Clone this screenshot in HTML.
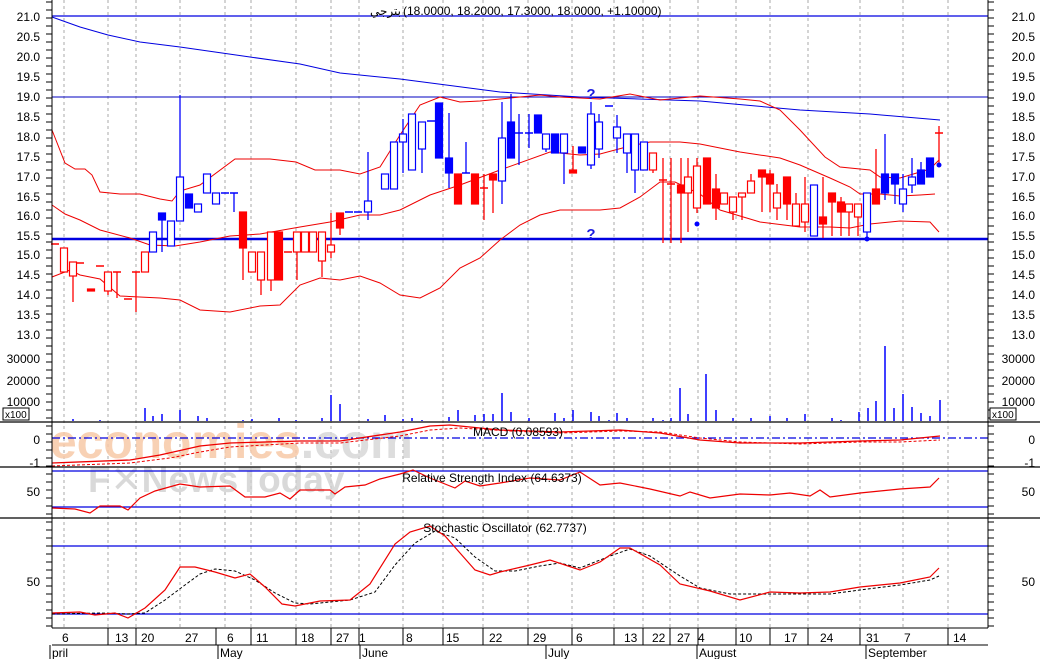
<!DOCTYPE html>
<html><head><meta charset="utf-8"><style>
html,body{margin:0;padding:0;background:#fff;width:1040px;height:659px;overflow:hidden}
svg{display:block;font-family:"Liberation Sans","DejaVu Sans",sans-serif}
</style></head><body>
<svg id="s" width="1040" height="659" viewBox="0 0 1040 659" xmlns="http://www.w3.org/2000/svg">
<rect width="1040" height="659" fill="#fff"/>
<g id="grid" stroke="#aaa" stroke-dasharray="3,3" stroke-width="1"></g>
<!-- watermark -->
<text x="50" y="458" font-size="48" fill="#f7c9a8" font-weight="bold" opacity="0.85">economies<tspan fill="#d8d8d8">.com</tspan></text>
<text x="88" y="492" font-size="37" fill="#d0d0d0" font-weight="bold" opacity="0.8">F✕NewsToday</text>
<g id="ind"></g>
<g id="price"></g>
<g id="axes"></g>
<text x="401" y="15" font-size="12" text-anchor="end" fill="#000" font-family="'DejaVu Sans',sans-serif">بترجي</text>
<text x="403" y="15" font-size="12" text-anchor="start" fill="#000" direction="ltr">(18.0000, 18.2000, 17.3000, 18.0000, +1.10000)</text>
<text x="518" y="436" font-size="12" text-anchor="middle" fill="#000">MACD (0.08593)</text>
<text x="492" y="482" font-size="12" text-anchor="middle" fill="#000">Relative Strength Index (64.6373)</text>
<text x="505" y="532" font-size="12" text-anchor="middle" fill="#000">Stochastic Oscillator (62.7737)</text>
<text x="591" y="99" font-size="15" font-weight="bold" text-anchor="middle" fill="#1a1ae0">?</text>
<text x="591" y="239" font-size="15" font-weight="bold" text-anchor="middle" fill="#1a1ae0">?</text>
</svg>
<script>
var NS="http://www.w3.org/2000/svg";
function el(p,t,a){var e=document.createElementNS(NS,t);for(var k in a)e.setAttribute(k,a[k]);document.getElementById(p).appendChild(e);return e;}
function pl(p,pts,c,w,d){el(p,"polyline",{points:pts.map(function(q){return q.join(",")}).join(" "),fill:"none",stroke:c,"stroke-width":w||1,"stroke-dasharray":d||""});}
function ln(p,x1,y1,x2,y2,c,w,d){el(p,"line",{x1:x1,y1:y1,x2:x2,y2:y2,stroke:c,"stroke-width":w||1,"stroke-dasharray":d||""});}
function tx(p,x,y,s,a,sz){var e=el(p,"text",{x:x,y:y,"font-size":sz||12,"text-anchor":a||"start",fill:"#000"});e.textContent=s;}
[64,108,136,180,225,251,296,331,359,403,443,483,528,572,614,643,670,698,736,770,808,860,903,948].forEach(function(x){ln("grid",x,0,x,628,"#aaa",1,"3,3");});
ln("ind",52,16,988,16,"#0000e0",1.3);
ln("ind",52,97,988,97,"#0000c0",1);
ln("ind",52,239,988,239,"#0000e0",2.5);
pl("ind",[[52,17],[80,27],[108,35],[140,42],[180,47],[250,57],[300,64],[340,73],[400,79],[500,92],[580,97],[700,101],[800,110],[870,114],[940,120]],"#0000e0",1);
pl("ind",[[52,130],[65,163],[75,169],[85,169],[92,175],[100,192],[110,193],[120,194],[140,194],[160,199],[172,201],[180,191],[200,185],[235,159],[270,159],[296,162],[315,170],[340,170],[360,174],[380,167],[400,135],[420,105],[440,97],[460,102],[480,101],[510,98],[540,95],[560,97],[600,99],[630,94],[660,100],[700,96],[740,99],[760,101],[780,110],[800,130],[825,157],[840,167],[870,170],[880,177],[900,178],[930,169],[939,160]],"#ee0000",1);
pl("ind",[[52,205],[65,214],[80,220],[100,230],[130,238],[150,245],[175,246],[200,242],[230,236],[260,234],[300,227],[330,222],[360,215],[380,215],[400,210],[430,195],[460,185],[500,170],[550,152],[580,155],[600,154],[630,146],[650,142],[680,142],[700,144],[740,152],[780,158],[800,165],[830,178],[850,187],[860,194],[880,194],[900,196],[920,195],[935,194]],"#ee0000",1);
pl("ind",[[52,277],[70,270],[80,275],[100,279],[120,296],[160,298],[180,300],[200,310],[230,312],[260,306],[280,305],[300,285],[320,278],[340,280],[360,276],[380,283],[400,295],[420,298],[440,288],[460,268],[480,258],[500,240],[520,225],[540,215],[560,210],[600,210],[620,208],[640,197],[660,182],[675,182],[700,194],[720,210],[760,222],[800,227],[830,227],[850,228],[870,224],[900,221],[930,222],[939,232]],"#ee0000",1);
var C=[[55,244,244,244,244,'r',0],[64,248,272,248,272,'r',0],[73,262,276,262,302,'r',0],[80,263,263,263,263,'r',0],[91,289,291,289,291,'r',1],[100,266,266,266,266,'r',0],[108,272,291,272,295,'r',0],[117,272,272,272,298,'r',0],[128,299,299,299,299,'r',0],[136,272,272,272,312,'r',0],[145,252,272,252,272,'r',0],
[153,232,252,232,252,'b',0],[162,213,220,213,252,'b',1],[171,221,246,221,246,'b',0],[180,177,221,95,221,'b',0],[189,194,208,194,208,'b',1],[198,204,212,204,212,'b',0],[207,174,193,174,193,'b',0],[216,193,204,193,204,'b',0],[225,193,193,193,193,'b',0],[234,193,193,193,212,'b',0],
[243,212,248,212,280,'r',1],[252,252,272,252,272,'r',0],[261,252,280,252,295,'r',0],[271,232,280,232,291,'r',0],[279,232,280,232,280,'r',1],[288,252,252,252,252,'r',0],[297,232,252,232,280,'r',0],[305,232,252,232,252,'r',0],[313,232,252,232,252,'r',0],[322,232,261,232,277,'r',0],[331,245,252,213,258,'r',0],[340,213,228,213,235,'r',1],
[349,212,212,212,212,'b',0],[358,212,212,212,212,'b',0],[368,201,212,152,220,'b',0],[385,174,189,174,189,'b',0],[394,142,189,142,189,'b',0],[403,134,142,119,173,'b',0],[412,114,170,114,170,'b',0],[422,122,149,122,173,'b',0],[431,121,121,121,121,'b',0],[439,103,158,103,158,'b',1],[449,158,173,113,188,'b',1],
[458,174,204,174,204,'r',1],[466,173,173,142,173,'b',0],[475,174,204,174,204,'r',1],[484,188,188,174,220,'r',0],[493,174,180,174,213,'r',1],
[502,138,181,102,204,'b',0],[511,122,158,94,158,'b',1],[519,133,133,114,165,'b',0],[529,133,133,114,148,'b',0],[538,115,133,115,133,'b',1],[546,134,149,134,152,'b',0],[555,134,153,134,153,'b',1],[564,134,153,134,184,'b',0],[573,170,173,146,173,'r',1],[582,147,153,147,153,'b',1],[591,114,165,102,169,'b',0],[599,122,149,114,158,'b',0],[609,106,106,106,106,'b',0],[617,127,138,115,153,'b',0],[627,134,153,134,173,'b',0],[635,134,170,134,193,'b',0],[644,142,170,142,170,'b',0],
[653,153,170,153,173,'r',0],[663,180,180,158,243,'r',0],[671,184,184,158,243,'r',0],[681,185,193,158,243,'r',1],[688,177,193,158,232,'r',0],[697,166,208,158,213,'r',0],[707,158,204,158,204,'r',1],[716,189,208,174,220,'r',1],[724,193,204,193,204,'r',0],[733,197,212,197,220,'r',0],[742,193,197,193,220,'r',0],[751,181,193,174,193,'r',0],[762,170,177,170,212,'r',1],[770,174,184,170,212,'r',1],[777,193,208,184,220,'r',0],[787,177,204,177,220,'r',1],[796,204,226,193,227,'r',0],[805,204,222,177,232,'r',0],[814,185,236,185,236,'b',0],[823,217,224,177,238,'r',1],[832,193,202,193,236,'r',1],[841,202,212,197,236,'r',1],[849,204,212,204,236,'r',0],[858,204,217,204,236,'r',0],[867,193,232,193,239,'b',0],[876,189,204,149,204,'r',1],[885,174,193,134,200,'b',1],[895,174,184,174,204,'b',1],[903,189,204,174,212,'b',0],[912,177,185,158,193,'b',0],[921,170,184,162,184,'b',1],[930,158,177,158,177,'b',1],[939,133,133,126,166,'r',0]];
C.forEach(function(c){var col=c[5]=='r'?'#ff0000':'#0000ff';
 ln("price",c[0],c[3],c[0],c[4],col,1.3);
 if(c[2]-c[1]<1){ln("price",c[0]-4,c[1],c[0]+4,c[1],col,1.5);}
 else el("price","rect",{x:c[0]-3.5,y:c[1],width:7,height:c[2]-c[1],fill:c[6]?col:"#fff",stroke:col,"stroke-width":1.2});
});
[[697,224],[939,165],[867,239]].forEach(function(p){el("price","circle",{cx:p[0],cy:p[1],r:2.5,fill:"#0000ff"});});
var V=[[73,419],[100,420],[145,408],[153,416],[162,414],[180,410],[198,416],[207,418],[243,420],[252,419],[279,418],[296,420],[322,418],[331,395],[340,404],[368,419],[385,415],[403,419],[412,418],[422,420],[449,417],[458,410],[475,415],[484,414],[493,414],[502,393],[511,412],[529,418],[555,413],[564,418],[573,410],[591,412],[599,416],[609,420],[617,413],[627,418],[653,418],[663,420],[671,418],[680,388],[688,414],[706,374],[716,410],[733,418],[751,418],[770,416],[787,418],[805,414],[832,418],[841,420],[859,412],[868,408],[876,401],[885,346],[894,408],[903,394],[912,407],[921,413],[930,416],[940,400]];
V.forEach(function(v){ln("price",v[0],v[1],v[0],421,"#0000ff",1.5);});
ln("ind",52,438,988,438,"#0000e0",1.2,"8,3,2,3");
pl("ind",[[52,463],[130,460],[160,455],[200,446],[230,443],[300,441],[340,441],[400,432],[430,426],[450,425],[500,430],[560,432],[620,430],[660,433],[700,440],[740,443],[800,443],[860,441],[900,440],[940,436]],"#ee0000",1.3);
pl("ind",[[52,466],[130,463],[170,458],[200,452],[230,447],[300,443],[340,443],[400,436],[430,430],[460,428],[510,431],[560,433],[620,431],[660,432],[700,438],[740,442],[800,444],[860,442],[900,442],[940,440]],"#ee0000",1,"3,2");
ln("ind",52,471,988,471,"#0000e0",1.2);ln("ind",52,507,988,507,"#0000e0",1.2);
pl("ind",[[52,508],[75,509],[90,513],[100,506],[120,506],[128,510],[140,498],[155,491],[180,484],[200,487],[230,486],[245,497],[265,497],[280,493],[290,499],[300,490],[330,490],[335,494],[345,487],[365,485],[380,479],[400,474],[413,470],[430,478],[455,488],[465,481],[480,486],[500,483],[530,478],[560,480],[580,472],[600,485],[620,483],[650,489],[680,496],[690,492],[710,498],[740,494],[770,495],[790,493],[810,496],[820,490],[830,497],[860,493],[900,489],[930,487],[939,478]],"#ee0000",1.2);
ln("ind",52,546,988,546,"#0000e0",1.2);ln("ind",52,614,988,614,"#0000e0",1.2);
pl("ind",[[52,614],[100,613],[128,614],[145,613],[165,600],[185,585],[200,574],[215,569],[235,571],[255,580],[275,593],[295,603],[310,604],[330,602],[350,600],[375,592],[395,565],[415,543],[435,531],[455,538],[475,557],[495,571],[515,571],[540,566],[560,563],[580,568],[610,556],[630,549],[650,556],[680,576],[700,588],[730,594],[760,594],[800,594],[830,594],[860,590],[900,585],[930,580],[939,576]],"#000",1,"3,2");
pl("ind",[[52,613],[80,612],[95,615],[115,613],[128,618],[145,608],[165,590],[180,567],[195,567],[215,572],[235,578],[250,574],[265,587],[282,604],[295,606],[320,601],[350,600],[370,584],[395,544],[410,532],[430,526],[445,536],[460,553],[475,570],[490,575],[500,572],[530,565],[550,560],[580,570],[600,562],[620,548],[630,548],[660,565],[680,584],[710,591],[740,600],[770,592],[800,593],[830,592],[860,587],[900,583],[930,577],[939,568]],"#ee0000",1.2);
ln("axes",52,0,52,628,"#000",1);ln("axes",988,0,988,628,"#000",1);
[422,467,518].forEach(function(y){ln("axes",0,y,1040,y,"#000",1.3);});
ln("axes",52,628,988,628,"#000",1);ln("axes",52,645,988,645,"#000",1);
for(var y=2;y<628;y+=8){ln("axes",46,y,52,y,"#000",1);ln("axes",988,y,994,y,"#000",1);}
var P=[["21.0",16],["20.5",36],["20.0",56],["19.5",76],["19.0",96],["18.5",116],["18.0",136],["17.5",156],["17.0",176],["16.5",196],["16.0",215],["15.5",235],["15.0",254],["14.5",274],["14.0",294],["13.5",314],["13.0",334],["30000",358],["20000",380],["10000",401],["0",439],["-1",462],["50",491],["50",581]];
P.forEach(function(p){tx("axes",40,p[1]+5,p[0],"end");tx("axes",1035,p[1]+5,p[0],"end");});
el("axes","rect",{x:3,y:408,width:26,height:12,fill:"#fff",stroke:"#000"});tx("axes",5,418,"x100","start",10);
el("axes","rect",{x:990,y:408,width:26,height:12,fill:"#fff",stroke:"#000"});tx("axes",992,418,"x100","start",10);
[[64,"6"],[117,"13"],[143,"20"],[187,"27"],[229,"6"],[258,"11"],[303,"18"],[338,"27"],[361,"1"],[408,"8"],[448,"15"],[491,"22"],[535,"29"],[578,"6"],[626,"13"],[654,"22"],[679,"27"],[700,"4"],[741,"10"],[786,"17"],[822,"24"],[868,"31"],[906,"7"],[955,"14"]].forEach(function(d){tx("axes",d[0]-2,642,d[1]);});
[108,136,216,251,296,331,359,403,443,483,528,572,614,643,670,698,736,770,808,860,948].forEach(function(x){ln("axes",x,628,x,645,"#000",1);});
[[50,"pril"],[218,"May"],[360,"June"],[546,"July"],[697,"August"],[866,"September"]].forEach(function(m){tx("axes",m[0]+2,657,m[1]);ln("axes",m[0],645,m[0],659,"#000",1);});
</script>
</body></html>
